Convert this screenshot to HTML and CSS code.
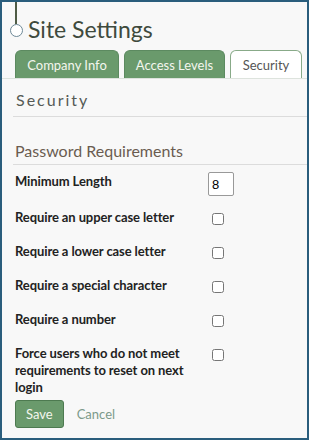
FILE: index.html
```html
<!DOCTYPE html>
<html lang="en">
<head>
    <meta charset="UTF-8">
    <meta name="viewport" content="width=device-width, initial-scale=1.0">
    <title>Site Settings</title>
    <link rel="stylesheet" href="styles.css">
</head>
<body>
    <div class="frame">
        <div class="title-row">
            <div class="pin">
                <span class="pin-line"></span>
                <span class="pin-dot"></span>
            </div>
            <h1>Site Settings</h1>
        </div>
        <div class="tabs">
            <div class="tab tab-company">Company Info</div>
            <div class="tab tab-access">Access Levels</div>
            <div class="tab tab-security active">Security</div>
        </div>
        <div class="panel">
            <h2 class="panel-title">Security</h2>
            <h3 class="section-title">Password Requirements</h3>
            <form class="rules">
                <div class="rule first">
                    <label for="minlen">Minimum Length</label>
                    <input type="text" id="minlen" class="num" value="8">
                </div>
                <div class="rule">
                    <label>Require an upper case letter</label>
                    <input type="checkbox">
                </div>
                <div class="rule">
                    <label>Require a lower case letter</label>
                    <input type="checkbox">
                </div>
                <div class="rule">
                    <label>Require a special character</label>
                    <input type="checkbox">
                </div>
                <div class="rule">
                    <label>Require a number</label>
                    <input type="checkbox">
                </div>
                <div class="rule last">
                    <label>Force users who do not meet requirements to reset on next login</label>
                    <input type="checkbox">
                </div>
                <div class="actions">
                    <button type="button" class="save">Save</button>
                    <a href="#" class="cancel">Cancel</a>
                </div>
            </form>
        </div>
    </div>
</body>
</html>
```

FILE: styles.css
```css
*{
    margin: 0;
    padding: 0;
    box-sizing: border-box;
}
body{
    width: 309px;
    height: 440px;
    background-color: #f8f8f8;
    font-family: Lato, "Open Sans", sans-serif;
}
.frame{
    width: 309px;
    height: 440px;
    border: 2px solid #2a5d7c;
    background-color: #f8f8f8;
    overflow: hidden;
}
.title-row{
    display: flex;
    align-items: flex-start;
    padding-left: 7px;
}
.pin{
    width: 14px;
    display: flex;
    flex-direction: column;
    align-items: center;
}
.pin-line{
    width: 2px;
    height: 22px;
    background-color: #4f5b45;
}
.pin-dot{
    width: 13px;
    height: 13px;
    border: 1.5px solid #6d8897;
    border-radius: 50%;
    background-color: #fff;
}
h1{
    font-weight: 400;
    font-size: 23px;
    color: #3f4a3d;
    margin: 12px 0 0 5px;
    line-height: 30px;
}
.tabs{
    display: flex;
    gap: 5px;
    padding: 6px 0 0 13px;
    border-bottom: 1px solid #dde3dd;
}
.tab{
    flex-shrink: 0;
    height: 28px;
    border: 1px solid #5c8a60;
    border-bottom: none;
    border-radius: 6px 6px 0 0;
    background-color: #6a9a6c;
    color: #f4f6ee;
    font-size: 13px;
    line-height: 28px;
    text-align: center;
    white-space: nowrap;
}
.tab-company{
    width: 104px;
}
.tab-access{
    width: 101px;
}
.tab-security{
    width: 72px;
}
.tab.active{
    background-color: #fff;
    color: #555;
    border-color: #88aa88;
}
.panel-title{
    font-weight: 400;
    font-size: 16px;
    letter-spacing: 2px;
    color: #555a55;
    padding: 11px 0 7px 3px;
    margin-left: 11px;
    border-bottom: 1px solid #dcdcdc;
}
.section-title{
    font-weight: 400;
    font-size: 16px;
    color: #6a5c50;
    margin: 24px 0 0 11px;
    padding-left: 2px;
    padding-bottom: 4px;
    border-bottom: 1px solid #dcdcdc;
}
.rules{
    padding: 8px 0 0 13px;
}
.rule{
    display: flex;
    align-items: flex-start;
    height: 34px;
}
.rule.first{
    height: 36px;
}
.rule label{
    width: 178px;
    margin-right: 15px;
    font-weight: 700;
    font-size: 13px;
    letter-spacing: -0.1px;
    line-height: 17px;
    color: #222;
}
.rule.last{
    height: auto;
}
.num{
    width: 26px;
    height: 24px;
    margin-top: -1px;
    border: 1px solid #999;
    border-radius: 2px;
    padding-left: 3px;
    font-size: 13px;
    font-family: "Liberation Sans", sans-serif;
    background-color: #fff;
}
input[type="checkbox"]{
    width: 12px;
    height: 12px;
    margin: 4px 0 0 4px;
}
.actions{
    display: flex;
    align-items: center;
    gap: 13px;
    margin-top: 4px;
}
.save{
    background-color: #6a9a6c;
    color: #f4f6ee;
    border: 1px solid #4d7a50;
    border-radius: 3px;
    font-family: Lato, sans-serif;
    font-size: 13px;
    padding: 5px 10px;
}
.cancel{
    color: #7c9a8a;
    font-size: 13px;
    text-decoration: none;
}
```
